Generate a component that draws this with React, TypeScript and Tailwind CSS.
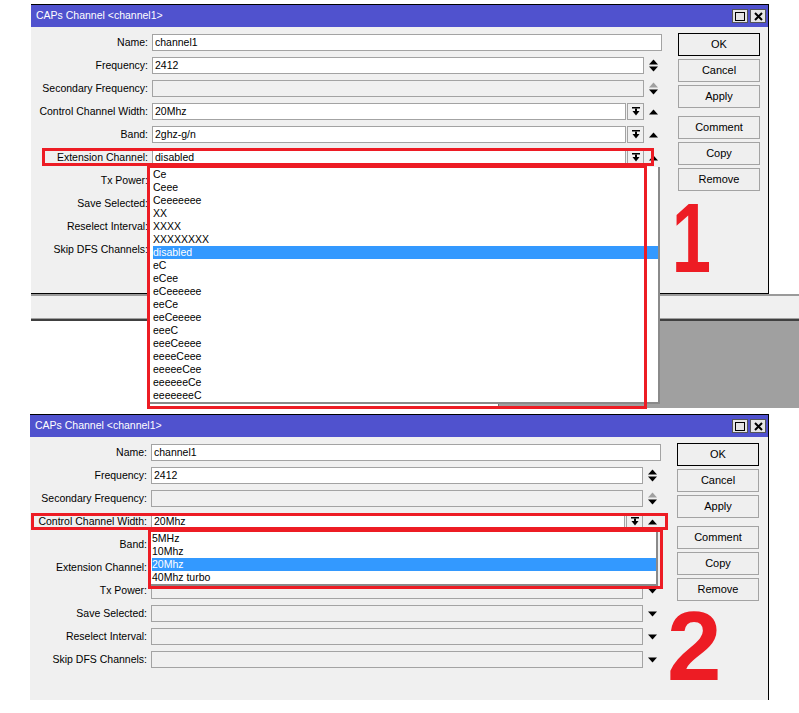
import React from 'react';

type Kind = 'text' | 'spin' | 'spinOff' | 'select' | 'off';
type Row = { label: string; kind: Kind; value?: string };

const rows: Row[] = [
  { label: 'Name', kind: 'text', value: 'channel1' },
  { label: 'Frequency', kind: 'spin', value: '2412' },
  { label: 'Secondary Frequency', kind: 'spinOff' },
  { label: 'Control Channel Width', kind: 'select', value: '20Mhz' },
  { label: 'Band', kind: 'select', value: '2ghz-g/n' },
  { label: 'Extension Channel', kind: 'select', value: 'disabled' },
  { label: 'Tx Power', kind: 'off' },
  { label: 'Save Selected', kind: 'off' },
  { label: 'Reselect Interval', kind: 'off' },
  { label: 'Skip DFS Channels', kind: 'off' },
];

const extOptions = [
  'Ce', 'Ceee', 'Ceeeeeee', 'XX', 'XXXX', 'XXXXXXXX', 'disabled', 'eC', 'eCee',
  'eCeeeeee', 'eeCe', 'eeCeeeee', 'eeeC', 'eeeCeeee', 'eeeeCeee', 'eeeeeCee',
  'eeeeeeCe', 'eeeeeeeC',
];

const widthOptions = ['5MHz', '10Mhz', '20Mhz', '40Mhz turbo'];

function SpinArrows({ off }: { off?: boolean }) {
  return (
    <svg width="9" height="13" viewBox="0 0 9 13">
      <path d="M0 5.5 L4.5 0.5 L9 5.5 Z" fill={off ? '#a0a0a0' : '#000'} />
      <path d="M0 7.5 L9 7.5 L4.5 12.5 Z" fill="#000" />
    </svg>
  );
}

function UpArrow() {
  return (
    <svg width="9" height="6" viewBox="0 0 9 6">
      <path d="M0 5.5 L4.5 0.5 L9 5.5 Z" fill="#000" />
    </svg>
  );
}

function DownArrow() {
  return (
    <svg width="9" height="6" viewBox="0 0 9 6">
      <path d="M0 0.5 L9 0.5 L4.5 5.5 Z" fill="#000" />
    </svg>
  );
}

function DropGlyph() {
  return (
    <svg width="8" height="9" viewBox="0 0 8 9">
      <rect x="0" y="0" width="8" height="1.5" fill="#000" />
      <rect x="3" y="1.5" width="2" height="2.5" fill="#000" />
      <path d="M0.5 4 L7.5 4 L4 8.5 Z" fill="#000" />
    </svg>
  );
}

function Field({ row }: { row: Row }) {
  const box = 'h-[17px] border border-[#a3a3a3] px-[2px] leading-[15px] whitespace-nowrap overflow-hidden';
  if (row.kind === 'text') {
    return <div className={`${box} w-[510px] bg-white`}>{row.value}</div>;
  }
  if (row.kind === 'select') {
    return (
      <div className="flex items-center">
        <div className={`${box} w-[474px] bg-white`}>{row.value}</div>
        <div className="ml-[1px] flex h-[17px] w-[17px] items-center justify-center border border-[#a3a3a3] bg-[#f0f0f0]">
          <DropGlyph />
        </div>
        <div className="flex w-[18px] justify-center">
          <UpArrow />
        </div>
      </div>
    );
  }
  const off = row.kind !== 'spin';
  return (
    <div className="flex items-center">
      <div className={`${box} w-[492px] ${off ? 'bg-[#f0f0f0]' : 'bg-white'}`}>{row.value}</div>
      <div className="flex w-[18px] justify-center">
        {row.kind === 'off' ? <DownArrow /> : <SpinArrows off={row.kind === 'spinOff'} />}
      </div>
    </div>
  );
}

function Button({ label, primary, className = '' }: { label: string; primary?: boolean; className?: string }) {
  return (
    <div
      className={`flex h-[23px] items-center justify-center border ${
        primary ? 'border-black' : 'border-[#a3a3a3]'
      } bg-[#efefef] text-[11px] ${className}`}
    >
      {label}
    </div>
  );
}

function Dialog({
  width,
  height,
  bottomBorder,
  children,
}: {
  width: number;
  height: number;
  bottomBorder?: boolean;
  children?: React.ReactNode;
}) {
  return (
    <div
      className={`relative flex flex-col border-t border-r border-black bg-[#f0f0f0] ${bottomBorder ? 'border-b' : ''}`}
      style={{ width, height }}
    >
      <div className="flex h-[22px] shrink-0 items-center justify-between bg-[#5052ce] pl-[5px] pr-[2px] text-white">
        <span>CAPs Channel &lt;channel1&gt;</span>
        <div className="flex gap-[2px]">
          <div className="flex h-[14px] w-[16px] items-center justify-center border border-[#555] bg-[#e6e6e6]">
            <div className="h-[9px] w-[10px] border-[1.5px] border-black" />
          </div>
          <div className="flex h-[14px] w-[16px] items-center justify-center border border-[#555] bg-[#e6e6e6]">
            <svg width="9" height="9" viewBox="0 0 9 9">
              <path d="M1 1 L8 8 M8 1 L1 8" stroke="#000" strokeWidth="2" />
            </svg>
          </div>
        </div>
      </div>
      <div className="flex items-start">
        <div className="w-[630px] pt-[4px]">
          {rows.map((row) => (
            <div key={row.label} className="flex h-[23px] items-center">
              <div className="w-[117px] shrink-0 whitespace-nowrap text-right">{row.label}:</div>
              <div className="ml-[4px]">
                <Field row={row} />
              </div>
            </div>
          ))}
        </div>
        <div className="ml-[17px] flex w-[82px] flex-col gap-[3px] pt-[6px]">
          <Button label="OK" primary />
          <Button label="Cancel" />
          <Button label="Apply" />
          <Button label="Comment" className="mt-[5px]" />
          <Button label="Copy" />
          <Button label="Remove" />
        </div>
      </div>
      {children}
    </div>
  );
}

function OptionList({ items, selected, className }: { items: string[]; selected: string; className: string }) {
  return (
    <div className={`absolute border-r-2 border-b-2 border-[#8a8a8a] bg-white ${className}`}>
      {items.map((item) => (
        <div
          key={item}
          className={`h-[13px] whitespace-nowrap leading-[13px] ${
            item === selected ? 'bg-[#3399ff] text-white' : ''
          }`}
        >
          {item}
        </div>
      ))}
    </div>
  );
}

export default function App() {
  return (
    <div className="relative h-[713px] w-[799px] overflow-hidden bg-white font-['Liberation_Sans',Arial,sans-serif] text-[10.5px] text-black">
      <div className="pl-[31px] pt-[4px]">
        <Dialog width={738} height={290} bottomBorder>
          <OptionList items={extOptions} selected="disabled" className="left-[119px] top-[162px] w-[510px] pt-[1px] pl-[3px]" />
          <div className="absolute left-[11px] top-[143px] h-[18px] w-[612px] border-[3px] border-[#ed1c24]" />
          <div className="absolute left-[116px] top-[160px] h-[244px] w-[500px] border-[3px] border-[#ed1c24]" />
          <span className="absolute left-[633px] top-[184px] origin-center scale-x-[0.72] text-[98px] font-bold leading-none text-[#ed1c24]">
            1
          </span>
        </Dialog>
      </div>

      {/* window behind, partly visible */}
      <div className="ml-[31px] h-[27px] border-t-2 border-b-2 border-t-[#9a9a9a] border-b-[#404040] bg-[#f0f0f0] shadow-[inset_0_-1px_0_#a0a0a0]" />
      <div className="flex h-[87px]">
        <div className="w-[498px]" />
        <div className="flex-1 border-l border-[#707070] bg-[#a0a0a0]" />
      </div>

      <div className="pl-[30px] pt-[6px]">
        <Dialog width={739} height={286}>
          <OptionList items={widthOptions} selected="20Mhz" className="left-[121px] top-[114px] w-[507px] pt-[3px] pl-[1px]" />
          <div className="absolute left-[1px] top-[98px] h-[17px] w-[637px] border-[3px] border-[#ed1c24]" />
          <div className="absolute left-[118px] top-[114px] h-[60px] w-[515px] border-[3px] border-[#ed1c24]" />
          <span className="absolute left-[637px] top-[182px] text-[98px] font-bold leading-none text-[#ed1c24]">2</span>
        </Dialog>
      </div>
    </div>
  );
}
